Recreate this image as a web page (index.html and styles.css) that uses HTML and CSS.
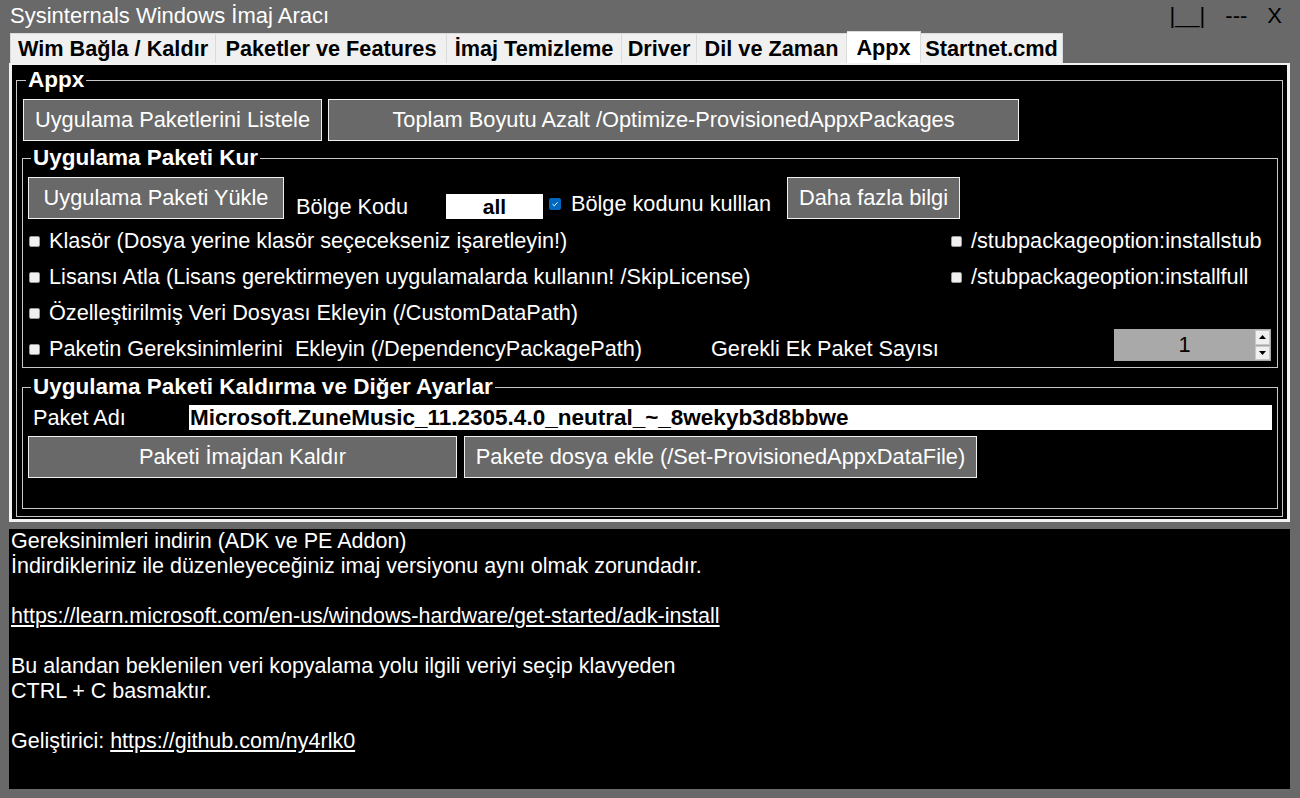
FILE: index.html
```html
<!DOCTYPE html>
<html lang="tr">
<head>
<meta charset="utf-8">
<title>Sysinternals Windows İmaj Aracı</title>
<link rel="stylesheet" href="styles.css">
</head>
<body>
<div class="window">
  <div class="titlebar">
    <span class="title">Sysinternals Windows İmaj Aracı</span>
    <div class="wctl"><span>|__|</span><span>---</span><span>X</span></div>
  </div>
  <div class="tabs">
    <div class="tab t1">Wim Bağla / Kaldır</div>
    <div class="tab t2">Paketler ve Features</div>
    <div class="tab t3">İmaj Temizleme</div>
    <div class="tab t4">Driver</div>
    <div class="tab t5">Dil ve Zaman</div>
    <div class="tab t6 active">Appx</div>
    <div class="tab t7">Startnet.cmd</div>
  </div>
  <div class="tabpage">
    <fieldset class="group g-appx">
      <legend>Appx</legend>
      <div class="btnrow r1">
        <div class="btn b-list">Uygulama Paketlerini Listele</div>
        <div class="btn b-opt">Toplam Boyutu Azalt /Optimize-ProvisionedAppxPackages</div>
      </div>
      <fieldset class="group g-kur">
        <legend>Uygulama Paketi Kur</legend>
        <div class="row-a">
          <div class="btn b-yukle">Uygulama Paketi Yükle</div>
          <span class="lbl-bolge">Bölge Kodu</span>
          <div class="tb-all">all</div>
          <div class="cb-wrap"><span class="cb checked"><svg viewBox="0 0 12 12" width="12" height="12"><path d="M3 6.2 L5.1 8.2 L9 4" fill="none" stroke="#fff" stroke-width="1.2"/></svg></span><span>Bölge kodunu kulllan</span></div>
          <div class="btn b-info">Daha fazla bilgi</div>
        </div>
        <div class="opt-row">
          <div class="chk"><span class="cb"></span><span>Klasör (Dosya yerine klasör seçecekseniz işaretleyin!)</span></div>
          <div class="chk right"><span class="cb"></span><span>/stubpackageoption:installstub</span></div>
        </div>
        <div class="opt-row">
          <div class="chk"><span class="cb"></span><span>Lisansı Atla (Lisans gerektirmeyen uygulamalarda kullanın! /SkipLicense)</span></div>
          <div class="chk right"><span class="cb"></span><span>/stubpackageoption:installfull</span></div>
        </div>
        <div class="opt-row">
          <div class="chk"><span class="cb"></span><span>Özelleştirilmiş Veri Dosyası Ekleyin (/CustomDataPath)</span></div>
        </div>
        <div class="opt-row">
          <div class="chk dep"><span class="cb"></span><span>Paketin Gereksinimlerini &nbsp;Ekleyin (/DependencyPackagePath)</span></div>
          <span class="lbl-ek">Gerekli Ek Paket Sayısı</span>
          <div class="spin">
            <span class="spin-val">1</span>
            <div class="spin-btns">
              <span class="sb"><svg viewBox="0 0 7 4" width="7" height="4"><path d="M0 4 L3.5 0 L7 4 Z" fill="#000"/></svg></span>
              <span class="sb"><svg viewBox="0 0 7 4" width="7" height="4"><path d="M0 0 L3.5 4 L7 0 Z" fill="#000"/></svg></span>
            </div>
          </div>
        </div>
      </fieldset>
      <fieldset class="group g-rem">
        <legend>Uygulama Paketi Kaldırma ve Diğer Ayarlar</legend>
        <div class="row-name">
          <span class="lbl-name">Paket Adı</span>
          <div class="tb-name">Microsoft.ZuneMusic_11.2305.4.0_neutral_~_8wekyb3d8bbwe</div>
        </div>
        <div class="btnrow r3">
          <div class="btn b-kaldir">Paketi İmajdan Kaldır</div>
          <div class="btn b-ekle">Pakete dosya ekle (/Set-ProvisionedAppxDataFile)</div>
        </div>
      </fieldset>
    </fieldset>
  </div>
  <div class="info">
    <p>Gereksinimleri indirin (ADK ve PE Addon)</p>
    <p>İndirdikleriniz ile düzenleyeceğiniz imaj versiyonu aynı olmak zorundadır.</p>
    <p class="blank"></p>
    <p><a href="#">https://learn.microsoft.com/en-us/windows-hardware/get-started/adk-install</a></p>
    <p class="blank"></p>
    <p>Bu alandan beklenilen veri kopyalama yolu ilgili veriyi seçip klavyeden</p>
    <p>CTRL + C basmaktır.</p>
    <p class="blank"></p>
    <p>Geliştirici: <a href="#">https://github.com/ny4rlk0</a></p>
  </div>
</div>
</body>
</html>
```

FILE: styles.css
```css
* { box-sizing: border-box; }
html, body { margin: 0; padding: 0; }
body {
  background: #696969;
  font-family: "Liberation Sans", Arial, sans-serif;
  width: 1300px;
  height: 798px;
  overflow: hidden;
}
.window { width: 1300px; height: 798px; }

.titlebar {
  height: 31px;
  display: flex;
  align-items: center;
  justify-content: space-between;
  padding: 0 18px 0 10px;
}
.title { color: #fff; font-size: 22px; }
.wctl { display: flex; gap: 20px; color: #000; font-size: 22px; }

.tabs {
  display: flex;
  align-items: flex-end;
  height: 32px;
  padding-left: 10px;
}
.tab {
  height: 30px;
  background: #f0f0f0;
  border: 1px solid #dadada;
  border-bottom: none;
  font-weight: bold;
  font-size: 21.7px;
  color: #000;
  display: flex;
  align-items: center;
  justify-content: center;
  white-space: nowrap;
}
.tab + .tab { border-left: none; }
.tab.active { height: 32px; background: #fff; }
.t1 { width: 206px; }
.t2 { width: 231px; }
.t3 { width: 175px; }
.t4 { width: 75px; }
.t5 { width: 150px; }
.t6 { width: 74px; }
.t7 { width: 142px; }

.tabpage {
  margin-left: 9px;
  width: 1281px;
  height: 459px;
  background: #000;
  border: 3px solid #f2f2f2;
  border-top-width: 2px;
  padding: 4px 4px 0 4px;
}

.group {
  margin: 0;
  min-width: 0;
  border: 1px solid #c8c8c8;
  color: #fff;
}
.group > legend {
  font-weight: bold;
  font-size: 22.5px;
  line-height: 22px;
  padding: 0 2px;
  margin-left: 3px;
  color: #fff;
}

.g-appx { padding: 8px 4px 0 5px; height: 448px; }
.g-appx > legend { margin-left: 4px; }

.btn {
  background: #696969;
  border: 1px solid #f0f0f0;
  color: #fff;
  font-size: 21.8px;
  display: flex;
  align-items: center;
  justify-content: center;
  white-space: nowrap;
}
.btnrow { display: flex; }
.r1 { gap: 6px; margin-left: 1px; }
.b-list { width: 299px; height: 42px; }
.b-opt { width: 691px; height: 42px; }

.g-kur { margin-top: 6px; padding: 8px 6px 0 5px; }
.row-a { display: flex; align-items: flex-end; height: 42px; margin-bottom: 4px; }
.b-yukle { width: 256px; height: 42px; }
.lbl-bolge { width: 150px; margin-left: 12px; font-size: 21.7px; line-height: 24px; margin-bottom: 0; }
.tb-all {
  width: 97px; height: 25px; background: #fff; color: #000;
  font-weight: bold; font-size: 21px; line-height: 25px; text-align: center;
}
.cb-wrap {
  width: 238px; margin-left: 6px; display: flex; align-items: center; gap: 10px;
  font-size: 21.7px; height: 25px; margin-bottom: 3px; white-space: nowrap;
}
.b-info { width: 173px; height: 42px; }

.cb {
  width: 11px; height: 11px; flex: none;
  background: #f0f0f0;
  border: 1px solid #9a9a9a;
  border-radius: 2px;
  display: inline-flex; align-items: center; justify-content: center;
}
.cb.checked { width: 12px; height: 12px; background: #0067c0; border-color: #0067c0; }
.cb svg { display: block; }

.opt-row { display: flex; align-items: center; height: 36px; font-size: 21.7px; }
.chk { display: flex; align-items: center; gap: 9px; margin-left: 1px; white-space: nowrap; }
.chk.right { margin-left: auto; width: 320px; }
.chk.dep { width: 682px; }
.lbl-ek { white-space: nowrap; }
.spin {
  margin-left: auto; width: 157px; height: 32px; background: #a9a9a9;
  display: flex; align-items: center; margin-bottom: 8px;
}
.spin-val { flex: 1; text-align: center; color: #000; font-size: 21.7px; padding-left: 0; }
.spin-btns { width: 15px; height: 30px; display: flex; flex-direction: column; gap: 1px; margin-right: 1px; }
.sb {
  flex: 1; background: #f0f0f0; border: 1px solid #c8c8c8;
  display: flex; align-items: center; justify-content: center;
}
.sb svg { display: block; }

.g-rem { margin-top: 8px; padding: 7px 5px 0 5px; height: 133px; }
.row-name { display: flex; align-items: center; height: 25px; }
.lbl-name { width: 161px; padding-left: 5px; font-size: 21.7px; }
.tb-name {
  flex: 1; height: 25px; background: #fff; color: #000;
  font-weight: bold; font-size: 22.5px; line-height: 25px; white-space: nowrap; padding-left: 1px;
  overflow: hidden;
}
.r3 { gap: 7px; margin-top: 6px; }
.b-kaldir { width: 429px; height: 42px; }
.b-ekle { width: 513px; height: 42px; }

.info {
  margin: 7px 0 0 9px;
  width: 1281px;
  height: 260px;
  background: #000;
  color: #fff;
  font-size: 21.5px;
  line-height: 25px;
  padding: 0 2px;
}
.info p { margin: 0; height: 25px; white-space: nowrap; }
.info a { color: #fff; text-decoration: underline; }
```
